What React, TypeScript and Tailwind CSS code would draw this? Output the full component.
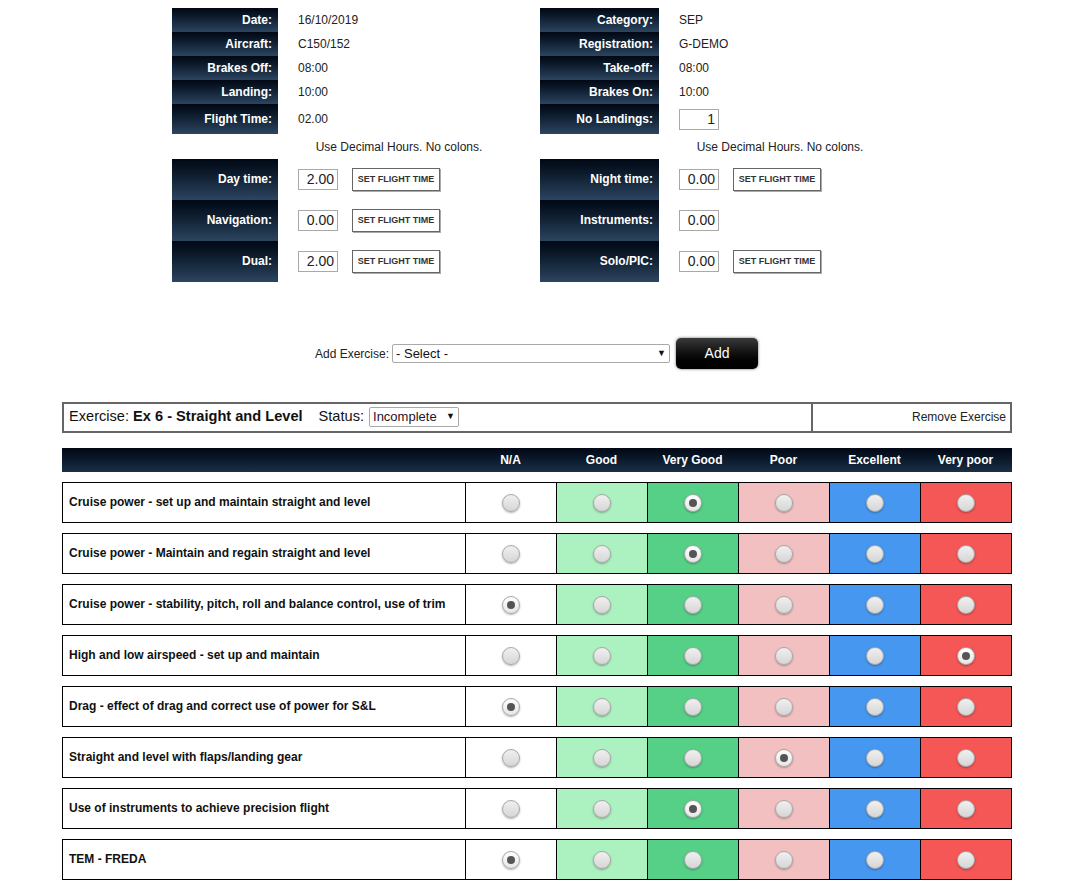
import React from "react";

type InfoRow = { label: string; value: React.ReactNode; tall?: boolean };

const labelCell =
  "bg-linear-to-b from-[#020814] to-[#2c4560] text-white font-bold text-[12px] text-right pr-[6px] flex items-center justify-end";

const NumBox: React.FC<{ value: string }> = ({ value }) => (
  <div className="w-[40px] h-[21px] border border-[#a9a9a9] bg-white text-[14px] text-[#222] text-right pr-[3px] leading-[19px]">
    {value}
  </div>
);

const SetButton: React.FC = () => (
  <button className="ml-[14px] w-[88px] h-[23px] border border-[#666] shadow-[1px_1px_0_#aaa] bg-white text-[9px] font-bold text-[#333]">
    SET FLIGHT TIME
  </button>
);

const InfoBlock: React.FC<{ labelW: string; rows: InfoRow[]; hours: { label: string; value: string; btn: boolean }[] }> = ({
  labelW,
  rows,
  hours,
}) => (
  <div className="w-fit">
    {rows.map((r) => (
      <div key={r.label} className={`flex ${r.tall ? "h-[30px]" : "h-[24px]"}`}>
        <div className={`${labelCell} ${labelW}`}>{r.label}</div>
        <div className="w-[242px] pl-[20px] flex items-center text-[12px] text-[#222]">{r.value}</div>
      </div>
    ))}
    <div className="flex h-[25px]">
      <div className={labelW} />
      <div className="w-[242px] flex items-center justify-center text-[12px] text-[#222]">
        Use Decimal Hours. No colons.
      </div>
    </div>
    {hours.map((h) => (
      <div key={h.label} className="flex h-[41px]">
        <div className={`${labelCell} ${labelW} pb-[2px]`}>{h.label}</div>
        <div className="w-[242px] pl-[20px] flex items-center">
          <NumBox value={h.value} />
          {h.btn && <SetButton />}
        </div>
      </div>
    ))}
  </div>
);

const Radio: React.FC<{ checked?: boolean }> = ({ checked }) => (
  <div
    className={`w-[18px] h-[18px] rounded-full border border-[#a8a8a8] shadow-[0_1px_2px_rgba(0,0,0,0.3)] flex items-center justify-center ${
      checked ? "bg-linear-to-b from-[#ffffff] to-[#e6e6e6]" : "bg-linear-to-b from-[#f0f0f0] to-[#d6d6d6]"
    }`}
  >
    {checked && <div className="w-[8px] h-[8px] rounded-full bg-[#555]" />}
  </div>
);

const grades = [
  { name: "N/A", bg: "bg-white" },
  { name: "Good", bg: "bg-[#acf1c0]" },
  { name: "Very Good", bg: "bg-[#56cf87]" },
  { name: "Poor", bg: "bg-[#f2c0c0]" },
  { name: "Excellent", bg: "bg-[#4697f0]" },
  { name: "Very poor", bg: "bg-[#f55656]" },
];

const items: [string, number][] = [
  ["Cruise power - set up and maintain straight and level", 2],
  ["Cruise power - Maintain and regain straight and level", 2],
  ["Cruise power - stability, pitch, roll and balance control, use of trim", 0],
  ["High and low airspeed - set up and maintain", 5],
  ["Drag - effect of drag and correct use of power for S&L", 0],
  ["Straight and level with flaps/landing gear", 3],
  ["Use of instruments to achieve precision flight", 2],
  ["TEM - FREDA", 0],
];

export default function App() {
  return (
    <div className="w-[1068px] min-h-[882px] bg-white pt-[8px] font-['Liberation_Sans',Arial,sans-serif]">
      <div className="flex pl-[172px] gap-[20px]">
        <InfoBlock
          labelW="w-[106px]"
          rows={[
            { label: "Date:", value: "16/10/2019" },
            { label: "Aircraft:", value: "C150/152" },
            { label: "Brakes Off:", value: "08:00" },
            { label: "Landing:", value: "10:00" },
            { label: "Flight Time:", value: "02.00", tall: true },
          ]}
          hours={[
            { label: "Day time:", value: "2.00", btn: true },
            { label: "Navigation:", value: "0.00", btn: true },
            { label: "Dual:", value: "2.00", btn: true },
          ]}
        />
        <InfoBlock
          labelW="w-[119px]"
          rows={[
            { label: "Category:", value: "SEP" },
            { label: "Registration:", value: "G-DEMO" },
            { label: "Take-off:", value: "08:00" },
            { label: "Brakes On:", value: "10:00" },
            { label: "No Landings:", value: <NumBox value="1" />, tall: true },
          ]}
          hours={[
            { label: "Night time:", value: "0.00", btn: true },
            { label: "Instruments:", value: "0.00", btn: false },
            { label: "Solo/PIC:", value: "0.00", btn: true },
          ]}
        />
      </div>

      {/* add exercise */}
      <div className="mt-[56px] flex justify-center items-center pl-[5px]">
        <span className="text-[12px] text-[#222] mr-[3px]">Add Exercise:</span>
        <div className="w-[278px] h-[19px] border border-[#a9a9a9] rounded-[2px] flex items-center justify-between px-[3px] text-[13px] text-[#111]">
          <span>- Select -</span>
          <span className="text-[9px]">▼</span>
        </div>
        <button className="ml-[6px] w-[82px] h-[31px] rounded-[5px] bg-linear-to-b from-[#3a3a3a] to-[#000] text-white text-[14px] shadow-[0_0_3px_rgba(0,0,0,0.6)]">
          Add
        </button>
      </div>

      {/* exercise header */}
      <div className="mt-[33px] ml-[62px] w-[950px] h-[31px] border-2 border-[#666] flex">
        <div className="flex-1 flex items-center pl-[5px] pb-[1px] text-[14.6px] text-[#111]">
          <span>Exercise:&nbsp;</span>
          <span className="font-bold">Ex 6 - Straight and Level</span>
          <span className="ml-[16px]">Status:</span>
          <div className="ml-[5px] w-[90px] h-[20px] border border-[#a9a9a9] rounded-[2px] flex items-center justify-between px-[3px] text-[13px] text-[#2a1028]">
            <span>Incomplete</span>
            <span className="text-[9px] text-[#111]">▼</span>
          </div>
        </div>
        <div className="w-[199px] border-l-2 border-[#666] flex items-center justify-end pr-[4px] pb-[1px] text-[12px] text-[#222]">
          Remove Exercise
        </div>
      </div>

      {/* grade header */}
      <div className="mt-[15px] ml-[62px] w-[950px] h-[24px] flex bg-linear-to-b from-[#020815] to-[#1b2f46]">
        <div className="w-[403px]" />
        {grades.map((g) => (
          <div key={g.name} className="w-[91px] flex items-center justify-center text-white text-[12px] font-bold">
            {g.name}
          </div>
        ))}
      </div>

      {items.map(([label, sel]) => (
        <div key={label} className="mt-[10px] ml-[62px] w-[950px] h-[41px] border border-black flex">
          <div className="flex-1 flex items-center pl-[6px] pb-[1px] text-[12px] font-bold text-[#111]">{label}</div>
          {grades.map((g, i) => (
            <div key={g.name} className={`w-[91px] shrink-0 border-l border-black flex items-center justify-center ${g.bg}`}>
              <Radio checked={i === sel} />
            </div>
          ))}
        </div>
      ))}
    </div>
  );
}
